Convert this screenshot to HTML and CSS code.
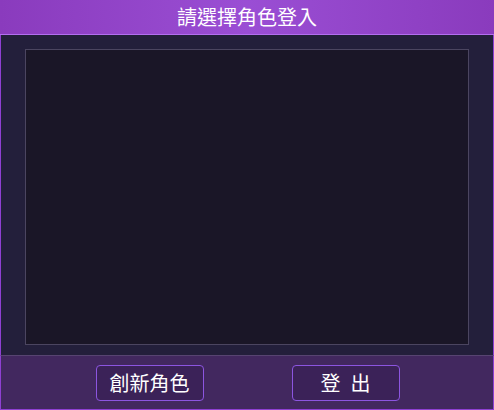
FILE: index.html
```html
<!DOCTYPE html>
<html lang="zh-Hant">
<head>
<meta charset="utf-8">
<title>請選擇角色登入</title>
<link rel="stylesheet" href="styles.css">
</head>
<body>
<div class="app">
  <header class="header">請選擇角色登入</header>
  <main class="main">
    <div class="role-list"></div>
  </main>
  <footer class="footer">
    <button class="btn">創新角色</button>
    <button class="btn">登&ensp;出</button>
  </footer>
</div>
</body>
</html>
```
FILE: styles.css
```css
* { box-sizing: border-box; }
html, body { margin: 0; padding: 0; }
body {
  width: 494px;
  height: 410px;
  overflow: hidden;
  font-family: "Noto Sans CJK TC", "Noto Sans", sans-serif;
  background: #231f3a;
}
.app {
  display: flex;
  flex-direction: column;
  width: 494px;
  height: 410px;
}
.header {
  height: 35px;
  flex: none;
  display: flex;
  align-items: center;
  justify-content: center;
  color: #ffffff;
  font-size: 20px;
  line-height: 1;
  padding-bottom: 1px;
  background: linear-gradient(90deg, #8a3bbd 0%, #9a4ed4 50%, #8a3bbd 100%);
  border-bottom: 1px solid #b46ef0;
}
.main {
  flex: 1;
  display: flex;
  padding: 14px 24px 10px 24px;
  background: #231f3b;
  border-left: 1px solid #8e40d2;
  border-right: 1px solid #8e40d2;
}
.role-list {
  flex: 1;
  background: #1a1627;
  border: 1px solid #4b4560;
}
.footer {
  height: 55px;
  flex: none;
  display: flex;
  justify-content: center;
  align-items: flex-start;
  gap: 88px;
  padding: 9px 0 0 1px;
  background: #42285f;
  border-top: 1px solid #574471;
  border-left: 1px solid #8e40d2;
  border-right: 1px solid #8e40d2;
  border-bottom: 1px solid #8e40d2;
}
.btn {
  width: 108px;
  height: 36px;
  padding: 0;
  background: #3b2258;
  color: #ffffff;
  border: 1px solid #8c55e0;
  border-radius: 4px;
  font-family: "Noto Sans CJK TC", "Noto Sans", sans-serif;
  font-size: 20px;
  line-height: 1;
}
```
